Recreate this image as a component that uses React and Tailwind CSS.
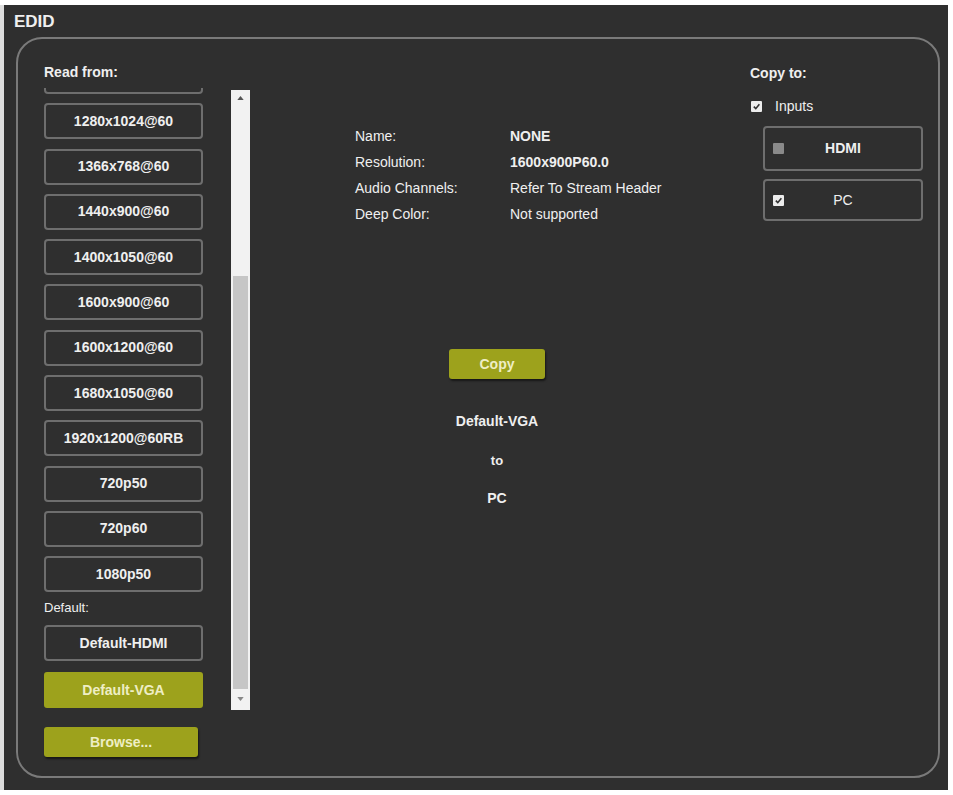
import React from 'react';

// first entry is scrolled out of view, only its bottom edge shows
const presets = [
    '',
    '1280x1024@60',
    '1366x768@60',
    '1440x900@60',
    '1400x1050@60',
    '1600x900@60',
    '1600x1200@60',
    '1680x1050@60',
    '1920x1200@60RB',
    '720p50',
    '720p60',
    '1080p50',
];

const info = [
    { label: 'Name:', value: 'NONE', bold: true },
    { label: 'Resolution:', value: '1600x900P60.0', bold: true },
    { label: 'Audio Channels:', value: 'Refer To Stream Header' },
    { label: 'Deep Color:', value: 'Not supported' },
];

const Check = ({ checked, disabled }) => (
    <span
        className={`flex h-[11px] w-[11px] items-center justify-center rounded-[1px] ${disabled ? 'bg-[#8a8a8a]' : 'bg-[#ececec]'}`}
    >
        {checked && (
            <svg viewBox="0 0 10 10" className="h-[9px] w-[9px]">
                <path d="M2 5.2 L4.2 7.4 L8.2 2.6" fill="none" stroke="#2f2f2f" strokeWidth="1.8" />
            </svg>
        )}
    </span>
);

const App = () => {
    return (
        <div className="h-[795px] w-[953px] bg-white pt-[5px] font-['Liberation_Sans',Arial,sans-serif]">
            <div className="flex">
                <div className="h-[785px] w-[4px] bg-[#dcdcdc]" />
                <div className="flex h-[785px] w-[944px] flex-col bg-[#2f2f2f] text-[#efefef]">
                    {/* Header */}
                    <div className="px-[10px] pt-[7px] text-[17px] font-bold leading-[20px]">EDID</div>

                    {/* Rounded frame */}
                    <div className="ml-[12px] mt-[5px] flex h-[741px] w-[924px] rounded-[26px] border-2 border-[#7a7a7a]">

                        {/* Read from column */}
                        <div className="flex w-[232px] shrink-0 flex-col pl-[26px] pt-[25px]">
                            <div className="text-[14px] font-bold leading-[16px]">Read from:</div>
                            <div className="mt-[8px] flex">
                                <div className="flex w-[159px] flex-col">
                                    <div className="h-[507px] overflow-hidden">
                                        <div className="-mt-[30px] flex flex-col gap-[9.3px]">
                                            {presets.map((p, i) => (
                                                <div
                                                    key={i}
                                                    className="flex h-[36px] shrink-0 items-center justify-center rounded-[4px] border-2 border-[#6e6e6e] text-[14px] font-bold"
                                                >
                                                    {p}
                                                </div>
                                            ))}
                                        </div>
                                    </div>
                                    <div className="mt-[5px] text-[13px] leading-[16px]">Default:</div>
                                    <div className="mt-[9px] flex h-[36px] items-center justify-center rounded-[4px] border-2 border-[#6e6e6e] text-[14px] font-bold">
                                        Default-HDMI
                                    </div>
                                    <div className="mt-[11px] flex h-[36px] items-center justify-center rounded-[3px] bg-[#9da21c] text-[14px] font-bold text-[#eeeec4]">
                                        Default-VGA
                                    </div>
                                </div>

                                {/* Scrollbar */}
                                <div className="ml-[28px] mt-[2px] flex h-[620px] w-[19px] flex-col items-center bg-[#f2f2f2] py-[2px]">
                                    <svg viewBox="0 0 8 5" className="mt-[4px] h-[4px] w-[7px]">
                                        <path d="M0 5 L4 0 L8 5 Z" fill="#555" />
                                    </svg>
                                    <div className="mt-[176px] h-[413px] w-[15px] bg-[#c6c6c6]" />
                                    <svg viewBox="0 0 8 5" className="mt-[8px] h-[4px] w-[7px]">
                                        <path d="M0 0 L4 5 L8 0 Z" fill="#888" />
                                    </svg>
                                </div>
                            </div>
                            <div className="mt-[17px] flex h-[30px] w-[154px] items-center justify-center rounded-[3px] bg-[#9da21c] text-[14px] font-bold text-[#eeeec4] shadow-[1px_2px_2px_rgba(0,0,0,0.5)]">
                                Browse...
                            </div>
                        </div>

                        {/* Middle column */}
                        <div className="flex w-[494px] shrink-0 flex-col pt-[84px]">
                            <div className="flex flex-col pl-[105px] text-[14px] leading-[26px]">
                                {info.map((r) => (
                                    <div key={r.label} className="flex">
                                        <span className="w-[155px]">{r.label}</span>
                                        <span className={r.bold ? 'font-bold' : ''}>{r.value}</span>
                                    </div>
                                ))}
                            </div>
                            <div className="mt-[122px] flex flex-col items-center">
                                <div className="flex h-[30px] w-[96px] items-center justify-center rounded-[3px] bg-[#9da21c] text-[14px] font-bold text-[#eeeec4] shadow-[1px_2px_2px_rgba(0,0,0,0.5)]">
                                    Copy
                                </div>
                                <div className="mt-[34px] text-[14px] font-bold leading-[16px]">Default-VGA</div>
                                <div className="mt-[24px] text-[13px] font-bold leading-[16px]">to</div>
                                <div className="mt-[21px] text-[14px] font-bold leading-[16px]">PC</div>
                            </div>
                        </div>

                        {/* Copy to column */}
                        <div className="flex flex-1 flex-col pl-[6px] pt-[26px]">
                            <div className="text-[14px] font-bold leading-[16px]">Copy to:</div>
                            <div className="mt-[17px] flex items-center gap-[13px] pl-[1px]">
                                <Check checked />
                                <span className="text-[14px] leading-[16px]">Inputs</span>
                            </div>
                            <div className="ml-[13px] mt-[12px] flex flex-col gap-[8px]">
                                <div className="relative flex h-[45px] w-[160px] items-center justify-center rounded-[4px] border-2 border-[#6e6e6e]">
                                    <span className="absolute left-[8px]"><Check disabled /></span>
                                    <span className="text-[14px] font-bold">HDMI</span>
                                </div>
                                <div className="relative flex h-[42px] w-[160px] items-center justify-center rounded-[4px] border-2 border-[#6e6e6e]">
                                    <span className="absolute left-[8px]"><Check checked /></span>
                                    <span className="text-[14px]">PC</span>
                                </div>
                            </div>
                        </div>
                    </div>
                </div>
            </div>
        </div>
    );
};

export default App;
